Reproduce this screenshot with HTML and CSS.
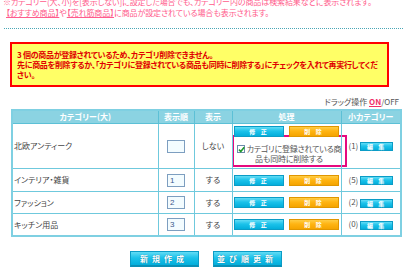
FILE: index.html
```html
<!DOCTYPE html>
<html lang="ja">
<head>
    <meta charset="UTF-8">
    <meta name="viewport" content="width=device-width, initial-scale=1.0">
    <title>カテゴリー一覧</title>
    <link rel="stylesheet" href="styles.css">
</head>
<body>
    <!-- Notes -->
    <p class="note">※カテゴリー(大、小)を[表示しない]に設定した場合でも、カテゴリー内の商品は検索結果などに表示されます。<br>
        <span class="indent"><a href="#">【おすすめ商品】</a>や<a href="#">【売れ筋商品】</a>に商品が設定されている場合も表示されます。</span></p>
    <hr class="rule">

    <!-- Error -->
    <div class="error">3 個の商品が登録されているため、カテゴリ削除できません。<br>先に商品を削除するか、「カテゴリに登録されている商品も同時に削除する」にチェックを入れて再実行してください。</div>

    <div class="drag">ドラッグ操作 <a href="#" class="on">ON</a>/OFF</div>

    <!-- Category table -->
    <table class="cat-table">
        <colgroup>
            <col class="w-name"><col class="w-order"><col class="w-show"><col class="w-act"><col class="w-sub">
        </colgroup>
        <thead>
            <tr>
                <th>カテゴリー(大)</th>
                <th>表示順</th>
                <th>表示</th>
                <th>処理</th>
                <th>小カテゴリー</th>
            </tr>
        </thead>
        <tbody>
            <tr class="row-tall">
                <td class="name">北欧アンティーク</td>
                <td><input class="order" type="text" value=""></td>
                <td>しない</td>
                <td class="act act-top">
                    <div class="btns">
                        <button class="btn btn-cyan btn-sm">修 正</button>
                        <button class="btn btn-orange btn-sm">削 除</button>
                    </div>
                    <label class="del-check"><span class="check"><svg width="7" height="7" viewBox="0 0 7 7"><path d="M1 3.6 L2.8 5.5 L6.2 1.2" fill="none" stroke="#1f9a2c" stroke-width="1.6"/></svg></span>カテゴリに登録されている商品も同時に削除する</label>
                </td>
                <td class="sub">(1) <button class="btn btn-cyan btn-xs">編 集</button></td>
            </tr>
            <tr class="row-a">
                <td class="name">インテリア・雑貨</td>
                <td><input class="order" type="text" value="1"></td>
                <td>する</td>
                <td class="act">
                    <div class="btns">
                        <button class="btn btn-cyan btn-sm">修 正</button>
                        <button class="btn btn-orange btn-sm">削 除</button>
                    </div>
                </td>
                <td class="sub">(5) <button class="btn btn-cyan btn-xs">編 集</button></td>
            </tr>
            <tr class="row-b">
                <td class="name">ファッション</td>
                <td><input class="order" type="text" value="2"></td>
                <td>する</td>
                <td class="act">
                    <div class="btns">
                        <button class="btn btn-cyan btn-sm">修 正</button>
                        <button class="btn btn-orange btn-sm">削 除</button>
                    </div>
                </td>
                <td class="sub">(2) <button class="btn btn-cyan btn-xs">編 集</button></td>
            </tr>
            <tr class="row-b">
                <td class="name">キッチン用品</td>
                <td><input class="order" type="text" value="3"></td>
                <td>する</td>
                <td class="act">
                    <div class="btns">
                        <button class="btn btn-cyan btn-sm">修 正</button>
                        <button class="btn btn-orange btn-sm">削 除</button>
                    </div>
                </td>
                <td class="sub">(0) <button class="btn btn-cyan btn-xs">編 集</button></td>
            </tr>
        </tbody>
    </table>

    <div class="actions">
        <button class="btn btn-cyan btn-big">新規作成</button>
        <button class="btn btn-cyan btn-big">並び順更新</button>
    </div>
</body>
</html>
```

FILE: styles.css
```css
body {
    margin: 0;
    font-family: "Noto Sans CJK JP", sans-serif;
    font-size: 8px;
    font-feature-settings: "palt";
    color: #444;
}
.note {
    margin: -4px 0 0 3px;
    color: #ff5c8c;
    line-height: 11px;
    letter-spacing: -0.1px;
}
.note .indent {
    padding-left: 3px;
}
.note a {
    color: #ff5c8c;
    text-decoration: underline;
}
.rule {
    height: 0;
    border: 0;
    border-top: 1px dotted #4aa7b6;
    margin: 10px 2px 0 4px;
}
.error {
    margin: 13px 16px 0 10px;
    padding: 6px 4px 5px 5px;
    border: 2px solid #ff0000;
    background-color: #ffff66;
    color: #e00000;
    font-weight: bold;
    line-height: 10px;
    letter-spacing: -0.3px;
}
.drag {
    margin: 10px 6px 0 0;
    text-align: right;
    line-height: 10px;
    color: #555;
}
.drag .on {
    color: #f0306a;
    font-weight: bold;
    text-decoration: underline;
}
.cat-table {
    margin: 2px 0 0 11px;
    width: 389px;
    table-layout: fixed;
    border-collapse: collapse;
    border: 2px solid #7fd0e2;
}
.w-name { width: 146px; }
.w-order { width: 36px; }
.w-show { width: 38px; }
.w-act { width: 109px; }
.w-sub { width: 60px; }
th {
    height: 12px;
    padding: 0;
    background-color: #8bd3e2;
    border: 1px solid #5cc0d6;
    color: #fff;
    font-weight: bold;
    line-height: 12px;
}
td {
    padding: 0;
    border: 1px solid #6fc9dd;
    text-align: center;
    vertical-align: middle;
    line-height: 10px;
}
.row-tall td { height: 42px; }
.row-a td { height: 22px; }
.row-b td { height: 21px; }
td.name {
    text-align: left;
    padding-left: 1px;
}
.order {
    box-sizing: border-box;
    width: 18px;
    height: 13px;
    margin: 0;
    padding: 0 0 0 2px;
    border: 1px solid #7d9ec0;
    background-color: #f3fcff;
    color: #3a5a8c;
    font-family: "Liberation Sans", sans-serif;
    font-size: 8px;
    vertical-align: middle;
}
.act-top {
    vertical-align: top;
    padding-top: 2px;
}
.btns {
    display: flex;
    justify-content: center;
    gap: 5px;
}
.btn {
    box-sizing: border-box;
    padding: 0;
    font-family: "Noto Sans CJK JP", sans-serif;
    color: #fff;
    font-weight: bold;
    cursor: pointer;
}
.btn-cyan {
    background: linear-gradient(#62dcf5 0%, #1cc2ea 45%, #03aedb 100%);
    border: 1px solid #0b9cc6;
}
.btn-orange {
    background: linear-gradient(#ffcd45 0%, #ffb412 45%, #f5a400 100%);
    border: 1px solid #e09600;
}
.btn-sm {
    width: 50px;
    height: 11px;
    font-size: 6px;
    line-height: 9px;
    letter-spacing: 2px;
}
.btn-xs {
    width: 33px;
    height: 9px;
    font-size: 6px;
    line-height: 7px;
    letter-spacing: 2px;
    vertical-align: middle;
}
.del-check {
    display: block;
    margin: -2px -6px -1px -1px;
    padding: 7px 0 1px;
    border: 2px solid #e6097f;
    line-height: 10px;
    color: #555;
    letter-spacing: -0.2px;
}
.check {
    display: inline-block;
    box-sizing: border-box;
    width: 8px;
    height: 8px;
    margin-right: 2px;
    border: 1px solid #6d8cab;
    background-color: #fff;
    vertical-align: -1px;
    line-height: 0;
}
.sub {
    color: #555;
}
.actions {
    display: flex;
    justify-content: center;
    gap: 14px;
    width: 389px;
    margin: 14px 0 0 11px;
}
.btn-big {
    width: 69px;
    height: 16px;
    font-size: 8px;
    letter-spacing: 4px;
    line-height: 14px;
    text-shadow: 0 0 1px #0a6f8c;
    border-bottom: 2px solid #0a8fb6;
}
```
